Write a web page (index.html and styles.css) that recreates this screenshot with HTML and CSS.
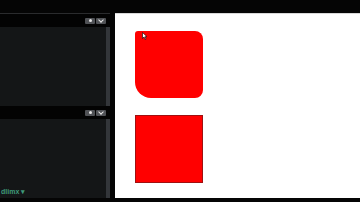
FILE: index.html
```html
<!DOCTYPE html>
<html lang="en">
<head>
  <meta charset="UTF-8" />
  <title>Preview</title>
  <link rel="stylesheet" href="styles.css">
</head>
<body>

<div class="topbar"></div>

<div class="main">
  <div class="sidebar">
    <div class="panel">
      <div class="panel-head">
        <span class="tool-btn"><span class="dot"></span></span>
        <span class="tool-btn"><span class="chev"></span></span>
      </div>
      <div class="panel-body">
        <div class="scroll"></div>
      </div>
    </div>
    <div class="panel">
      <div class="panel-head">
        <span class="tool-btn"><span class="dot"></span></span>
        <span class="tool-btn"><span class="chev"></span></span>
      </div>
      <div class="panel-body">
        <span class="status">dlimx &#9662;</span>
        <div class="scroll"></div>
      </div>
    </div>
  </div>

  <div class="stage">
    <div class="box rounded">
      <svg class="cursor" width="6" height="8" viewBox="0 0 6 8">
        <path d="M0.5 0.5 L0.5 6.5 L2 5 L3.2 7.5 L4 7.1 L2.9 4.7 L5 4.7 Z" fill="#fff" stroke="#000" stroke-width="0.6"/>
      </svg>
    </div>
    <div class="box square"></div>
  </div>
</div>

</body>
</html>
```

FILE: styles.css
```css
body {
  margin: 0;
  padding: 0;
  width: 360px;
  height: 202px;
  background: #050505;
  font-family: 'Liberation Sans', Arial, sans-serif;
  overflow: hidden;
}

.topbar {
  height: 13px;
  background: #050505;
}

.main {
  display: flex;
  height: 185px;
  gap: 5px;
}

.sidebar {
  width: 110px;
  display: flex;
  flex-direction: column;
  border-top: 1px solid #2a2b2d;
  box-sizing: border-box;
}

.panel {
  flex: 1;
  display: flex;
  flex-direction: column;
}

.panel-head {
  height: 13px;
  background: #030303;
  display: flex;
  justify-content: flex-end;
  align-items: center;
  gap: 1px;
  padding-right: 4px;
}

.tool-btn {
  width: 10px;
  height: 6px;
  background: #505256;
  border-radius: 1px;
  display: flex;
  align-items: center;
  justify-content: center;
}

.dot {
  width: 3px;
  height: 3px;
  border-radius: 50%;
  background: #e6e6e6;
}

.chev {
  width: 3px;
  height: 3px;
  border-right: 1px solid #e6e6e6;
  border-bottom: 1px solid #e6e6e6;
  transform: translateY(-1px) rotate(45deg);
}

.panel-body {
  flex: 1;
  background: #141617;
  position: relative;
}

.scroll {
  position: absolute;
  right: 0;
  top: 0;
  bottom: 0;
  width: 4px;
  background: #33363a;
}

.status {
  position: absolute;
  left: 1px;
  bottom: 2px;
  font-size: 7px;
  font-weight: bold;
  color: #3f9a7a;
}

.stage {
  flex: 1;
  background: #ffffff;
  border-top: 1px solid #d8d8d8;
  padding: 17px 20px 0;
  display: flex;
  flex-direction: column;
  gap: 17px;
}

.box {
  flex-shrink: 0;
  width: 68px;
  height: 67px;
  background: #ff0000;
  position: relative;
}

.rounded {
  border-radius: 3px 8px 8px 16px;
}

.square {
  height: 68px;
  box-sizing: border-box;
  border: 1px solid #a01010;
}

.cursor {
  position: absolute;
  left: 7px;
  top: 1px;
}
```
